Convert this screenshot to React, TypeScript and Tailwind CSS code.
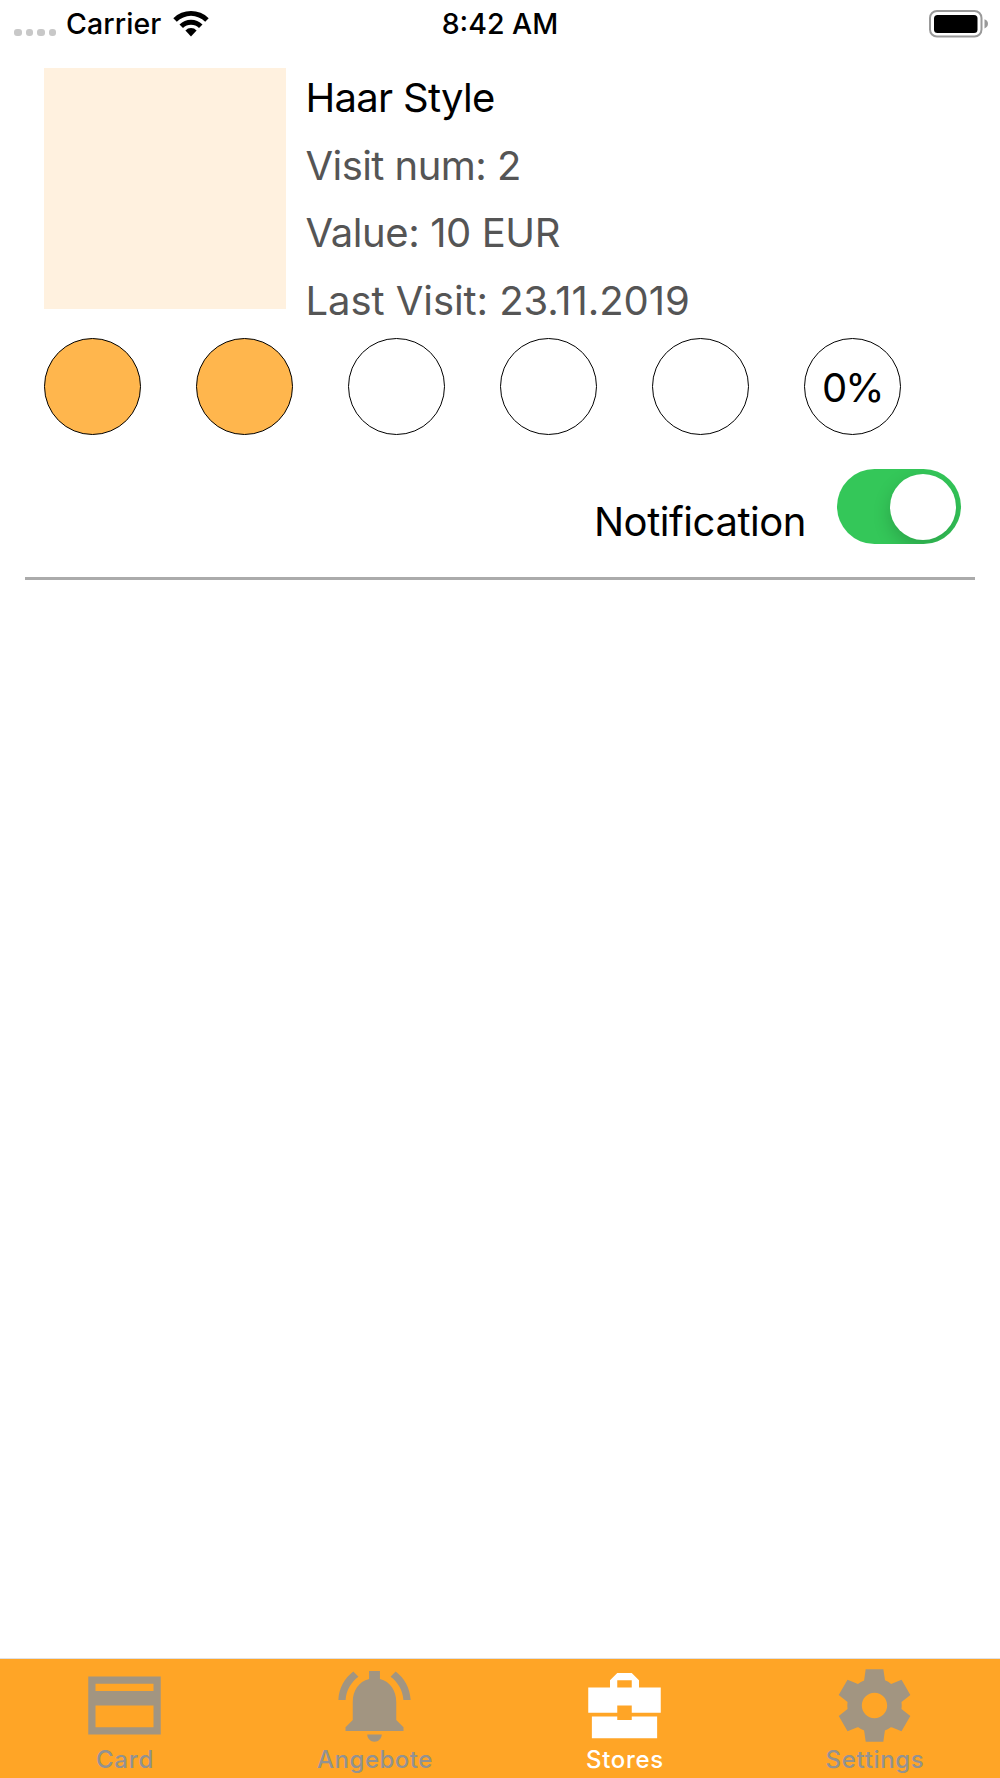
import { useState } from "react";

const stamps = [
  { filled: true },
  { filled: true },
  { filled: false },
  { filled: false },
  { filled: false },
  { filled: false, label: "0%" },
];

const tabs = [
  {
    name: "Card",
    tracking: "tracking-[0.8px]",
    path: "M2 4h20v16H2zM4 6v2h16V6zM4 12v6h16v-6z",
  },
  {
    name: "Angebote",
    tracking: "tracking-[0.5px]",
    path: "M12 22c1.1 0 2-.9 2-2h-4c0 1.1.9 2 2 2zM7.58 4.08L6.15 2.65C3.75 4.48 2.17 7.3 2.03 10.5h2c.15-2.65 1.51-4.97 3.55-6.42zM19.97 10.5h2c-.15-3.2-1.73-6.02-4.12-7.85l-1.42 1.43c2.02 1.45 3.39 3.77 3.54 6.42zM18 16v-5c0-3.07-1.64-5.64-4.5-6.32V2.5h-3v2.18C7.63 5.36 6 7.92 6 11v5l-2 2v1h16v-1l-2-2z",
  },
  {
    name: "Stores",
    tracking: "tracking-[0.7px]",
    path: "M10 16v-1H3v6h18v-6h-7v1h-4zM22 7h-6V5l-2-2h-4L8 5v2H2v7h8v-2h4v2h8V7zm-8 0h-4V5h4v2z",
  },
  {
    name: "Settings",
    tracking: "tracking-[0.65px]",
    path: "M19.44 12.99l-.01.02c.04-.33.08-.67.08-1.01 0-.34-.03-.66-.07-.99l.01.02 2.44-1.92-2.43-4.22-2.87 1.16.01.01c-.52-.4-1.09-.74-1.71-1h.01L14.44 2H9.57l-.44 3.07h.01c-.62.26-1.19.6-1.71 1l.01-.01-2.88-1.17-2.44 4.22 2.44 1.92.01-.02c-.04.33-.07.65-.07.99 0 .34.03.68.08 1.01l-.01-.02-2.43 1.91 2.43 4.2 2.88-1.15-.02-.04c.53.41 1.1.75 1.73 1.01h-.03L9.58 22h4.85l.44-3.07h-.01c.62-.26 1.2-.6 1.73-1.01l-.02.04 2.88 1.15 2.43-4.2zM12 15.5c-1.93 0-3.5-1.57-3.5-3.5s1.57-3.5 3.5-3.5 3.5 1.57 3.5 3.5-1.57 3.5-3.5 3.5z",
  },
];

const StatusBar = () => {
  return (
    <div className="grid h-12 grid-cols-3 items-center text-[28.5px] leading-12 font-medium">
      <div className="flex items-center">
        <div className="mt-[17px] ml-[14px] flex gap-[4px]">
          {[0, 1, 2, 3].map((dot) => (
            <span
              key={dot}
              className="h-[7.5px] w-[7.5px] rounded-[3px] bg-[#c8c8c8]"
            />
          ))}
        </div>
        <span className="ml-[10px] tracking-[0.1px]">Carrier</span>
        <svg viewBox="0 0 36 27" className="-mt-px ml-[11px] h-[27px] w-9">
          <path d="M.3 8.2a25.3 25.3 0 0 1 35.4 0l-3.5 3.5a20.2 20.2 0 0 0-28.4 0z" />
          <path d="M6.5 14.4a16.4 16.4 0 0 1 23 0L26 17.9a11.5 11.5 0 0 0-16 0z" />
          <path d="M12.4 20.4a8 8 0 0 1 11.2 0L18 26.4z" />
        </svg>
      </div>
      <div className="text-center">8:42 AM</div>
      <div className="flex justify-end pr-[12px]">
        <svg viewBox="0 0 59 28" className="h-7 w-[59px]">
          <rect
            x="1"
            y="1"
            width="51.5"
            height="25.5"
            rx="7"
            fill="none"
            stroke="#999"
            strokeWidth="2"
          />
          <rect x="5" y="5" width="43.5" height="18" rx="3.5" />
          <path d="M55.5 9.2q3.5 1.3 3.5 4.6t-3.5 4.6z" fill="#999" />
        </svg>
      </div>
    </div>
  );
};

const App = () => {
  const [notify, setNotify] = useState(true);
  const [active, setActive] = useState("Stores");

  return (
    <div className="flex h-[1778px] w-[1000px] flex-col overflow-hidden bg-white font-['Inter',sans-serif] text-black">
      <StatusBar />

      <main className="flex-1">
        <div className="mx-[25px] h-[532px] border-b-3 border-[#ababab] pt-5 pl-[19.4px]">
          <div className="flex h-[270px]">
            <div className="h-[241px] w-[241.6px] bg-[#fff1df]" />
            <div className="-mt-[4px] ml-[19.5px] text-[40px] leading-[67.7px] whitespace-nowrap text-[#555]">
              <p className="tracking-[-0.7px] text-black">Haar Style</p>
              <p className="tracking-[-0.55px]">Visit num: 2</p>
              <p className="tracking-[-0.4px]">Value: 10 EUR</p>
              <p className="tracking-[-0.06px]">Last Visit: 23.11.2019</p>
            </div>
          </div>

          <div className="flex gap-[54.9px]">
            {stamps.map((stamp, index) => (
              <div
                key={index}
                className={`flex h-[97px] w-[97px] shrink-0 items-center justify-center rounded-full border border-black pt-[2px] text-[40px] tracking-[-2px] ${
                  stamp.filled ? "bg-[#ffb64d]" : "bg-white"
                }`}
              >
                {stamp.label}
              </div>
            ))}
          </div>

          <div className="mt-[34px] flex justify-end pr-[14px]">
            <span className="mt-[23px] mr-[31px] text-[40px] leading-[60px] tracking-[-0.45px]">
              Notification
            </span>
            <button
              role="switch"
              aria-checked={notify}
              aria-label="Notification"
              onClick={() => setNotify(!notify)}
              className={`flex h-[75px] w-[124px] items-center overflow-hidden rounded-full px-[5px] ${
                notify ? "justify-end bg-[#34c759]" : "justify-start bg-gray-200"
              }`}
            >
              <span className="h-[66px] w-[66px] rounded-full bg-white shadow-[0_7px_18px_rgba(0,0,0,0.18)]" />
            </button>
          </div>
        </div>
      </main>

      <nav className="grid h-[120px] grid-cols-4 border-t border-[#dfe0e4] bg-[#ffa526]">
        {tabs.map((tab) => (
          <button
            key={tab.name}
            onClick={() => setActive(tab.name)}
            className={`flex flex-col items-center ${
              active === tab.name ? "text-white" : "text-[#929292]"
            }`}
          >
            <svg
              viewBox="0 0 24 24"
              fillRule="evenodd"
              className={`mt-[3px] mr-px h-[87px] w-[87px] shrink-0 ${
                active === tab.name ? "fill-white" : "fill-[#a29581]"
              }`}
            >
              <path d={tab.path} />
            </svg>
            <span
              className={`-mt-[4px] text-[24px] leading-[30px] font-medium ${tab.tracking}`}
            >
              {tab.name}
            </span>
          </button>
        ))}
      </nav>
    </div>
  );
};

export default App;
